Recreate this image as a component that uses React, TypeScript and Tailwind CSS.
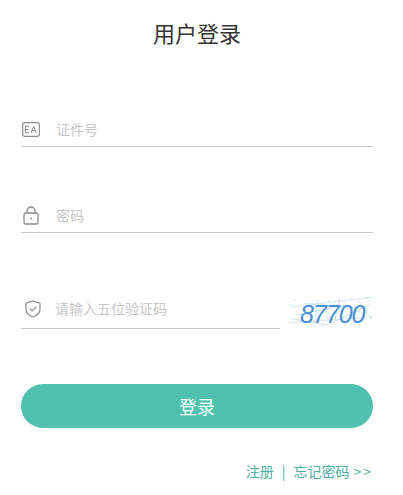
const font = { fontFamily: '"Noto Sans CJK SC", sans-serif' };

function IdIcon() {
  return (
    <svg width="18" height="15" viewBox="0 0 18 15" fill="none" stroke="#8c8c8c" strokeWidth="1.2">
      <rect x="0.7" y="0.7" width="16.6" height="13.6" rx="2" />
      <path d="M7 4.2H3.4v6.6H7M3.4 7.5H6.5" strokeWidth="1" />
      <path d="M9 10.8 L11.6 4.2 L14.2 10.8 M10 8.6H13.2" strokeWidth="1" />
    </svg>
  );
}

function LockIcon() {
  return (
    <svg width="16" height="19" viewBox="0 0 16 19" fill="none" stroke="#8c8c8c" strokeWidth="1.3">
      <rect x="1" y="7" width="14" height="11" rx="1.5" />
      <path d="M4 7V5a4 4 0 0 1 8 0v2" />
      <path d="M8 11.5v2" />
    </svg>
  );
}

function ShieldIcon() {
  return (
    <svg width="16" height="18" viewBox="0 0 16 18" fill="none" stroke="#8c8c8c" strokeWidth="1.2">
      <path d="M8 1 L15 3.2 V9 C15 13 11.5 15.8 8 17 C4.5 15.8 1 13 1 9 V3.2 Z" />
      <path d="M4.8 8.6 L7.2 11 L11.4 6.8" />
    </svg>
  );
}

function Field({ icon, text, className }: { icon: React.ReactNode; text: string; className: string }) {
  return (
    <div className={`flex h-[34px] items-center border-b border-[#c8c8c8] ${className}`}>
      <div className="shrink-0">{icon}</div>
      <span className="text-[14px] text-[#c8c8c8]">{text}</span>
    </div>
  );
}

function Captcha() {
  return (
    <div className="relative mr-[-2px] h-[34px] w-[87px] shrink-0">
      <svg width="87" height="34" viewBox="0 0 87 34" fill="none" className="absolute inset-0">
        <path d="M3 12 L86 2 M16 8 L80 14 M1 28 L84 22 M30 4 L26 32 M52 2 L46 30 M70 6 L84 24" stroke="#c4dbe2" strokeWidth="0.7" />
        <path d="M8 20 L60 10 M4 24 L40 30 M48 26 L82 10" stroke="#a8cfe8" strokeWidth="0.6" />
        <path d="M40 6h1M62 4h1M78 3h1M2 10h1M6 5h1M34 31h1M66 30h1M76 28h1" stroke="#9cc4de" strokeWidth="1" />
      </svg>
      <span className="absolute left-[12px] top-[5px] text-[25px] leading-[28px] tracking-[-1px] text-[#4a8fd6] italic" style={{ fontFamily: '"Liberation Sans", sans-serif' }}>
        87700
      </span>
    </div>
  );
}

export default function App() {
  return (
    <div className="h-[495px] w-[403px] overflow-hidden bg-white px-[21px] text-[#333]" style={font}>
      <div className="mr-[9px]">
        <h1 className="pt-[16px] text-center text-[22px] leading-[32px] font-normal text-[#333]">用户登录</h1>
        <Field icon={<IdIcon />} text="证件号" className="mt-[65px] gap-[16px] pl-[1px]" />
        <Field icon={<LockIcon />} text="密码" className="mt-[52px] gap-[17px] pl-[2px]" />
        <div className="mt-[62px] flex items-end justify-between">
          <Field icon={<ShieldIcon />} text="请输入五位验证码" className="w-[259px] gap-[14px] pb-[6px] pl-[4px]" />
          <Captcha />
        </div>
        <button className="mt-[55px] h-[44px] w-full rounded-full bg-[#4fc1ae] text-[18px] text-white">登录</button>
        <div className="mt-[33px] flex justify-end text-[14px] leading-[20px] text-[#4fae9f]">
          <span>注册</span>
          <span className="mx-[8px]">|</span>
          <span>忘记密码</span>
          <span className="ml-[4px] tracking-[2px]">&gt;&gt;</span>
        </div>
      </div>
    </div>
  );
}
